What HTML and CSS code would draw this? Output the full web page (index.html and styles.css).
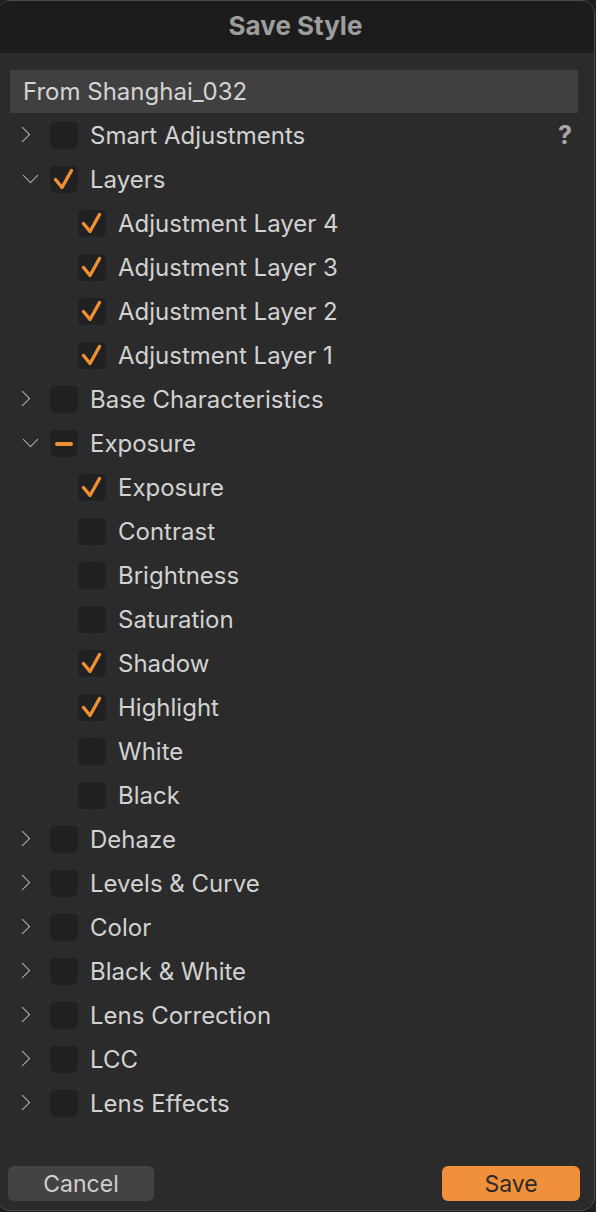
FILE: index.html
```html
<!DOCTYPE html>
<html>
<head>
<meta charset="utf-8">
<link rel="stylesheet" href="styles.css">
</head>
<body>
<div class="window">
  <div class="titlebar">Save Style</div>
  <div class="content">
    <div class="namefield">From Shanghai_032</div>
    <div class="tree">
      <div class="row"><span class="chev right"></span><span class="cb"></span><span class="label">Smart Adjustments</span><span class="help">?</span></div>
      <div class="row"><span class="chev down"></span><span class="cb"><svg class="tick" viewBox="0 0 28 27"><path d="M5.5 13.5 L12 21.5 L21.5 4.5"/></svg></span><span class="label">Layers</span></div>
      <div class="row child"><span class="cb"><svg class="tick" viewBox="0 0 28 27"><path d="M5.5 13.5 L12 21.5 L21.5 4.5"/></svg></span><span class="label">Adjustment Layer 4</span></div>
      <div class="row child"><span class="cb"><svg class="tick" viewBox="0 0 28 27"><path d="M5.5 13.5 L12 21.5 L21.5 4.5"/></svg></span><span class="label">Adjustment Layer 3</span></div>
      <div class="row child"><span class="cb"><svg class="tick" viewBox="0 0 28 27"><path d="M5.5 13.5 L12 21.5 L21.5 4.5"/></svg></span><span class="label">Adjustment Layer 2</span></div>
      <div class="row child"><span class="cb"><svg class="tick" viewBox="0 0 28 27"><path d="M5.5 13.5 L12 21.5 L21.5 4.5"/></svg></span><span class="label">Adjustment Layer 1</span></div>
      <div class="row"><span class="chev right"></span><span class="cb"></span><span class="label">Base Characteristics</span></div>
      <div class="row"><span class="chev down"></span><span class="cb mixed"></span><span class="label">Exposure</span></div>
      <div class="row child"><span class="cb"><svg class="tick" viewBox="0 0 28 27"><path d="M5.5 13.5 L12 21.5 L21.5 4.5"/></svg></span><span class="label">Exposure</span></div>
      <div class="row child"><span class="cb"></span><span class="label">Contrast</span></div>
      <div class="row child"><span class="cb"></span><span class="label">Brightness</span></div>
      <div class="row child"><span class="cb"></span><span class="label">Saturation</span></div>
      <div class="row child"><span class="cb"><svg class="tick" viewBox="0 0 28 27"><path d="M5.5 13.5 L12 21.5 L21.5 4.5"/></svg></span><span class="label">Shadow</span></div>
      <div class="row child"><span class="cb"><svg class="tick" viewBox="0 0 28 27"><path d="M5.5 13.5 L12 21.5 L21.5 4.5"/></svg></span><span class="label">Highlight</span></div>
      <div class="row child"><span class="cb"></span><span class="label">White</span></div>
      <div class="row child"><span class="cb"></span><span class="label">Black</span></div>
      <div class="row"><span class="chev right"></span><span class="cb"></span><span class="label">Dehaze</span></div>
      <div class="row"><span class="chev right"></span><span class="cb"></span><span class="label">Levels &amp; Curve</span></div>
      <div class="row"><span class="chev right"></span><span class="cb"></span><span class="label">Color</span></div>
      <div class="row"><span class="chev right"></span><span class="cb"></span><span class="label">Black &amp; White</span></div>
      <div class="row"><span class="chev right"></span><span class="cb"></span><span class="label">Lens Correction</span></div>
      <div class="row"><span class="chev right"></span><span class="cb"></span><span class="label">LCC</span></div>
      <div class="row"><span class="chev right"></span><span class="cb"></span><span class="label">Lens Effects</span></div>
    </div>
    <div class="buttons">
      <button class="btn cancel">Cancel</button>
      <button class="btn save">Save</button>
    </div>
  </div>
</div>
</body>
</html>
```
FILE: styles.css
```css
html, body {
  margin: 0;
  padding: 0;
  background: #1e1e1e;
  width: 596px;
  height: 1212px;
  overflow: hidden;
}
body {
  font-family: "Inter", "Liberation Sans", sans-serif;
  -webkit-font-smoothing: antialiased;
}
.window {
  box-sizing: border-box;
  margin-left: -4px;
  width: 599px;
  height: 1211px;
  background: #2b2b2b;
  border: 1px solid #4a4a4a;
  border-radius: 14px;
  overflow: hidden;
  display: flex;
  flex-direction: column;
}
.titlebar {
  height: 52px;
  flex: none;
  background: #1c1c1c;
  color: #9d9d9d;
  font-weight: 700;
  font-size: 26px;
  display: flex;
  align-items: center;
  justify-content: center;
  padding-bottom: 4px;
  box-sizing: border-box;
}
.content {
  flex: 1;
  display: flex;
  flex-direction: column;
  padding: 17px 0 0 13px;
}
.namefield {
  width: 568px;
  height: 43px;
  box-sizing: border-box;
  background: #404040;
  color: #d4d4d4;
  font-size: 24px;
  padding-left: 13px;
  display: flex;
  align-items: center;
}
.tree {
  display: flex;
  flex-direction: column;
}
.row {
  height: 44px;
  display: flex;
  align-items: center;
  position: relative;
  color: #d2d2d2;
  font-size: 24px;
}
.row.child {
  padding-left: 68px;
}
.chev {
  width: 40px;
  height: 20px;
  flex: none;
  position: relative;
}
.chev::before {
  content: "";
  position: absolute;
  width: 10px;
  height: 10px;
  border-right: 1.6px solid #b4b4b4;
  border-bottom: 1.6px solid #b4b4b4;
}
.chev.right::before {
  left: 7px;
  top: 4px;
  transform: rotate(-45deg);
}
.chev.down::before {
  left: 15px;
  top: 1px;
  transform: rotate(45deg);
}
.cb {
  width: 28px;
  height: 27px;
  flex: none;
  box-sizing: border-box;
  background: #212121;
  border-radius: 5px;
  margin-right: 12px;
  position: relative;
}
.tick {
  position: absolute;
  left: 0;
  top: 0;
  width: 28px;
  height: 27px;
  fill: none;
  stroke: #f08f33;
  stroke-width: 3.4;
  stroke-linecap: round;
  stroke-linejoin: round;
}
.cb.mixed::after {
  content: "";
  position: absolute;
  left: 5px;
  top: 12px;
  width: 18px;
  height: 4px;
  border-radius: 2px;
  background: #f08f33;
}
.label {
  white-space: nowrap;
}
.help {
  position: absolute;
  right: 22px;
  top: 7px;
  font-weight: 700;
  color: #a8a8a8;
  font-size: 25px;
}
.buttons {
  margin-top: auto;
  display: flex;
  justify-content: space-between;
  padding: 0 14px 9px 0;
  margin-left: -2px;
}
.btn {
  height: 35px;
  border: none;
  border-radius: 6px;
  font-family: "Inter", "Liberation Sans", sans-serif;
  font-size: 23px;
  padding: 0;
}
.cancel {
  width: 146px;
  background: #434343;
  color: #cfcfcf;
}
.save {
  width: 138px;
  background: #f0903a;
  color: #2a2a2a;
}
```
